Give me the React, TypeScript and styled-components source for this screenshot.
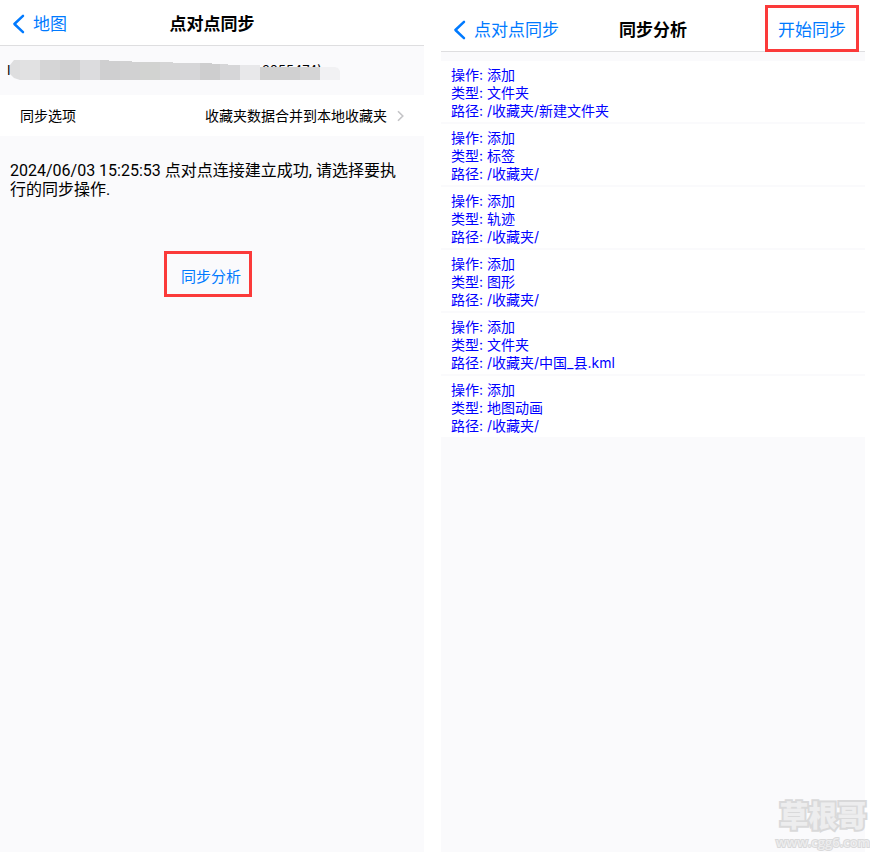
import React from "react";
import styled, { createGlobalStyle } from "styled-components";

const GlobalStyle = createGlobalStyle`
  *, *::before, *::after { box-sizing: border-box; }
  body {
    margin: 0;
    background: #fff;
    color: #000;
    font-family: "Inter", "Noto Sans CJK SC", sans-serif;
    font-size: 14px;
  }
  button { font-family: inherit; background: none; border: 0; padding: 0; cursor: pointer; }
`;

const Page = styled.main`
  position: relative;
  display: grid;
  grid-template-columns: 1fr 1fr;
  column-gap: 17px;
  padding-right: 5px;
  min-height: 100vh;
`;

const Screen = styled.section`
  background: #fafafc;
  min-width: 0;
`;

const NavBar = styled.header<{ $height: number; $top: number }>`
  display: grid;
  grid-template-columns: 1fr auto 1fr;
  align-items: center;
  height: ${(p) => p.$height}px;
  padding: ${(p) => p.$top}px 6px 0 12px;
  background: #fff;
  border-bottom: 1px solid #dedee0;
`;

const BackLink = styled.a`
  display: flex;
  align-items: center;
  gap: 8px;
  padding-top: 2px;
  color: #007aff;
  font-size: 17px;
  line-height: 24px;
  text-decoration: none;
  white-space: nowrap;
`;

const Title = styled.h1`
  margin: 0 6px 0 0;
  padding-top: 2px;
  font-size: 17px;
  line-height: 24px;
  font-weight: 600;
`;

const StartButton = styled.button`
  justify-self: end;
  height: 47px;
  padding: 3px 10px 0;
  border: 3px solid #fb3a3a;
  color: #007aff;
  font-size: 17px;
  line-height: 24px;
`;

const DeviceRow = styled.div`
  position: relative;
  display: flex;
  justify-content: space-between;
  width: 322px;
  height: 49px;
  padding: 15px 0 0 7px;
  font-size: 13px;
  line-height: 18px;
`;

const Mosaic = styled.svg`
  position: absolute;
  left: 10px;
  top: 14px;
`;

const OptionRow = styled.button`
  display: flex;
  align-items: center;
  width: 100%;
  height: 41px;
  padding: 0 20px;
  background: #fff;
  color: #000;
  font-size: 14px;
  line-height: 20px;
`;

const OptionValue = styled.span`
  margin-left: auto;
  margin-right: 10px;
`;

const Message = styled.p`
  margin: 0;
  padding: 25px 20px 0 10px;
  font-family: "Roboto", "Noto Sans CJK SC", sans-serif;
  font-size: 16px;
  line-height: 19px;
`;

const Actions = styled.div`
  display: flex;
  justify-content: center;
  padding: 52px 8px 0 0;
`;

const AnalyzeButton = styled.button`
  height: 46px;
  padding: 5px 8px 0 14px;
  border: 3px solid #fb3a3a;
  color: #007aff;
  font-size: 15px;
  line-height: 20px;
`;

const ChangeList = styled.ul`
  display: grid;
  gap: 2px;
  margin: 0;
  padding: 9px 0 0;
  list-style: none;
`;

const ChangeItem = styled.li`
  padding: 5px 10px 2px;
  background: #fff;
  color: #0000ff;
  font-size: 14px;
  line-height: 18px;
`;

const Line = styled.div``;

const Watermark = styled.aside`
  position: absolute;
  right: 0;
  bottom: 0;
  display: flex;
  flex-direction: column;
  align-items: center;
  color: #ededee;
  -webkit-text-stroke: 4px #d9d9da;
  paint-order: stroke fill;
  white-space: nowrap;
`;

const WatermarkName = styled.div`
  font-family: "Noto Sans CJK SC", sans-serif;
  font-size: 29px;
  font-weight: 900;
  line-height: 32px;
`;

const WatermarkSite = styled.div`
  -webkit-text-stroke-width: 2px;
  padding-top: 2px;
  font-family: "Open Sans", sans-serif;
  font-size: 13px;
  font-weight: 600;
  line-height: 20px;
`;

const BackIcon = () => (
  <svg width="13" height="20" viewBox="0 0 13 20" fill="none" aria-hidden="true">
    <path d="M11 1.8 2.4 10l8.6 8.2" stroke="#007aff" strokeWidth="2.5" strokeLinecap="round" strokeLinejoin="round" />
  </svg>
);

const DisclosureIcon = () => (
  <svg width="7" height="12" viewBox="0 0 7 12" fill="none" aria-hidden="true">
    <path d="m1 1.2 4.8 4.8L1 10.8" stroke="#c4c4c7" strokeWidth="1.6" />
  </svg>
);

const tiles = [
  "#dededf", "#e1e1e2", "#d5d5d6", "#d0d0d1", "#dcdcde", "#cfcfd0",
  "#d1d1d2", "#d2d3d1", "#d5d5d6", "#d6d6d8", "#cececf", "#d6d6d8",
  "#e8e8ea", "#d1d1d1", "#d0d0d1", "#d5d5d6", "#f1f1f3",
];

const DeviceMosaic = () => (
  <Mosaic width="330" height="20" viewBox="0 0 330 20" aria-hidden="true">
    <defs>
      <clipPath id="stroke">
        <path d="M4 0H99V1H122V2H163V3H202V4H218V5H250V7H325L328 8 330 11V20H10L4 18 0 14V5Z" />
      </clipPath>
    </defs>
    <g clipPath="url(#stroke)">
      {tiles.map((fill, i) => (
        <rect key={i} x={i * 20 - 10} width="20" height="20" fill={fill} shapeRendering="crispEdges" />
      ))}
    </g>
  </Mosaic>
);

const changes = [
  { type: "文件夹", path: "/收藏夹/新建文件夹" },
  { type: "标签", path: "/收藏夹/" },
  { type: "轨迹", path: "/收藏夹/" },
  { type: "图形", path: "/收藏夹/" },
  { type: "文件夹", path: "/收藏夹/中国_县.kml" },
  { type: "地图动画", path: "/收藏夹/" },
];

export default function App() {
  return (
    <>
      <GlobalStyle />
      <Page>
        <Screen>
          <NavBar $height={46} $top={0}>
            <BackLink href="#map"><BackIcon />地图</BackLink>
            <Title>点对点同步</Title>
          </NavBar>
          <DeviceRow>
            <span>I</span>
            <span>2055474)</span>
            <DeviceMosaic />
          </DeviceRow>
          <OptionRow>
            <span>同步选项</span>
            <OptionValue>收藏夹数据合并到本地收藏夹</OptionValue>
            <DisclosureIcon />
          </OptionRow>
          <Message>2024/06/03 15:25:53 点对点连接建立成功, 请选择要执行的同步操作.</Message>
          <Actions>
            <AnalyzeButton>同步分析</AnalyzeButton>
          </Actions>
        </Screen>
        <Screen>
          <NavBar $height={52} $top={5}>
            <BackLink href="#sync"><BackIcon />点对点同步</BackLink>
            <Title>同步分析</Title>
            <StartButton>开始同步</StartButton>
          </NavBar>
          <ChangeList>
            {changes.map((c, i) => (
              <ChangeItem key={i}>
                <Line>操作: 添加</Line>
                <Line>类型: {c.type}</Line>
                <Line>路径: {c.path}</Line>
              </ChangeItem>
            ))}
          </ChangeList>
        </Screen>
        <Watermark>
          <WatermarkName>草根哥</WatermarkName>
          <WatermarkSite>www.cgg6.com</WatermarkSite>
        </Watermark>
      </Page>
    </>
  );
}
